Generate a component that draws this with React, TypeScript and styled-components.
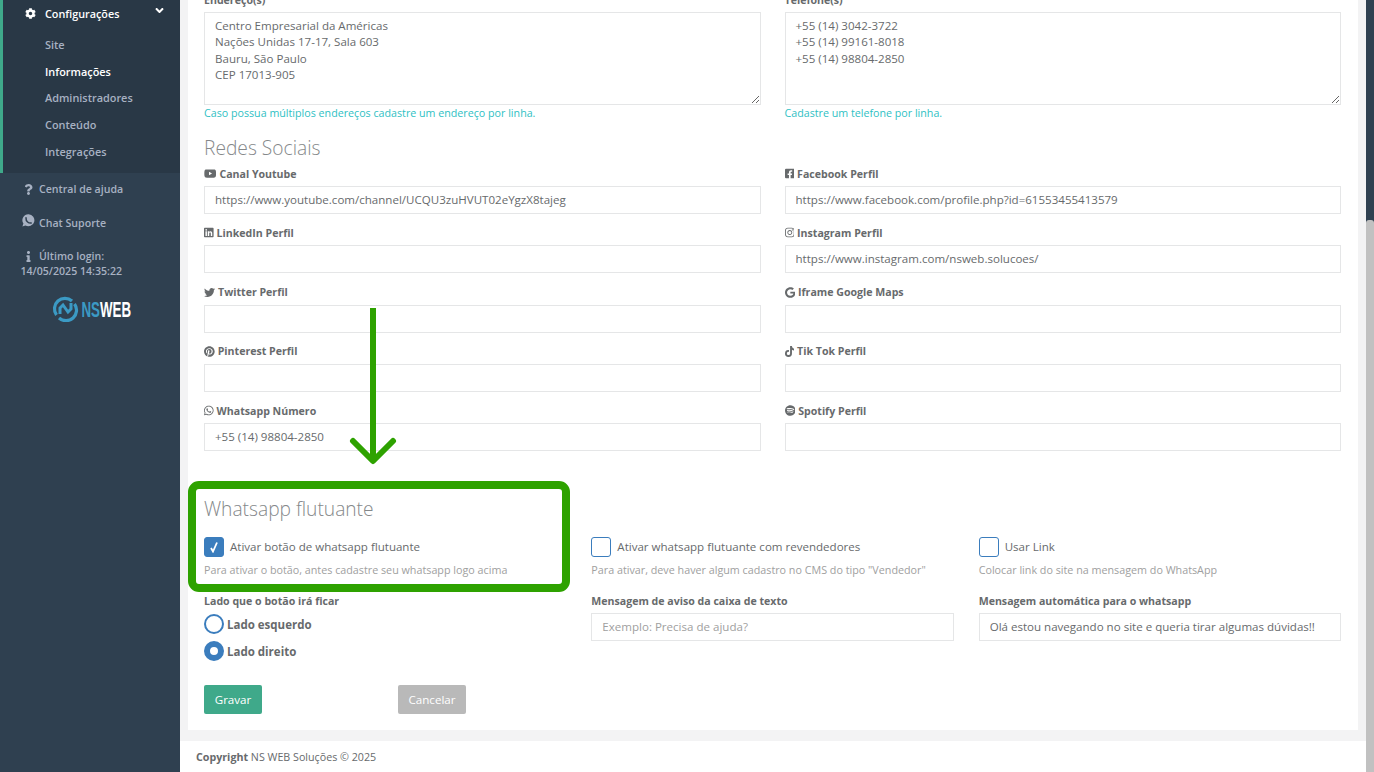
import React from "react";
import styled, { createGlobalStyle } from "styled-components";
import {
  FaAngleDown,
  FaCog,
  FaFacebookSquare,
  FaGoogle,
  FaInfo,
  FaInstagram,
  FaLinkedin,
  FaPinterest,
  FaQuestion,
  FaSpotify,
  FaTiktok,
  FaTwitter,
  FaWhatsapp,
  FaYoutube,
} from "react-icons/fa";

const GlobalStyle = createGlobalStyle`
  html, body {
    margin: 0;
    height: 100%;
    overflow: hidden;
    background: #f3f3f4;
    font-family: "Open Sans", "Liberation Sans", sans-serif;
    color: #676a6c;
  }
  * { box-sizing: border-box; }
`;

const socials = [
  { icon: <FaYoutube />, w: 12.4, label: "Canal Youtube", value: "https://www.youtube.com/channel/UCQU3zuHVUT02eYgzX8tajeg" },
  { icon: <FaFacebookSquare />, w: 9.6, label: "Facebook Perfil", value: "https://www.facebook.com/profile.php?id=61553455413579" },
  { icon: <FaLinkedin />, w: 9.6, label: "LinkedIn Perfil", value: "" },
  { icon: <FaInstagram />, w: 9.6, label: "Instagram Perfil", value: "https://www.instagram.com/nsweb.solucoes/" },
  { icon: <FaTwitter />, w: 11, label: "Twitter Perfil", value: "" },
  { icon: <FaGoogle />, w: 10.5, label: "Iframe Google Maps", value: "" },
  { icon: <FaPinterest />, w: 10.7, label: "Pinterest Perfil", value: "" },
  { icon: <FaTiktok />, w: 9.6, label: "Tik Tok Perfil", value: "" },
  { icon: <FaWhatsapp />, w: 9.6, label: "Whatsapp Número", value: "+55 (14) 98804-2850" },
  { icon: <FaSpotify />, w: 10.7, label: "Spotify Perfil", value: "" },
];

const submenu = ["Site", "Informações", "Administradores", "Conteúdo", "Integrações"];

function Logo() {
  return (
    <svg width="80" height="26" viewBox="0 0 80 26">
      <path d="M20 5 A10.5 10.5 0 0 0 4.5 19" fill="none" stroke="#3b9ac4" strokeWidth="3.2" />
      <path d="M7 22 A10.5 10.5 0 0 0 22.5 8" fill="none" stroke="#3b9ac4" strokeWidth="3.2" />
      <path d="M8 18 L8 12 L11 9 L16 16 L19 13 L19 7" fill="none" stroke="#3b9ac4" strokeWidth="3" />
      <text x="29.5" y="21" fontFamily="Liberation Sans, sans-serif" fontWeight="700" fontSize="22" fill="#ffffff" textLength="49.5" lengthAdjust="spacingAndGlyphs">
        <tspan fill="#3b9ac4">NS</tspan>WEB
      </text>
    </svg>
  );
}

function ChatIcon() {
  return (
    <svg width="13" height="13" viewBox="0 0 13 13">
      <path d="M6.6 0.3 A6 6 0 1 1 3.4 11.5 L0.4 12.6 L1.4 9.6 A6 6 0 0 1 6.6 0.3 Z" fill="#a7b1c2" />
      <path d="M4 3.8 Q3.8 6.6 5.6 8 Q7 9.2 9.2 9" fill="none" stroke="#2f4050" strokeWidth="1.5" strokeLinecap="round" />
    </svg>
  );
}

export default function App() {
  return (
    <Page>
      <GlobalStyle />
      <Sidebar>
        <ActiveGroup>
          <GroupHead>
            <FaCog size={11} />
            <GroupTitle>Configurações</GroupTitle>
            <Caret>
              <FaAngleDown size={13} />
            </Caret>
          </GroupHead>
          {submenu.map((item) => (
            <SubItem key={item} $active={item === "Informações"}>
              {item}
            </SubItem>
          ))}
        </ActiveGroup>
        <SideLink $top={8}>
          <SideIcon><FaQuestion size={11} /></SideIcon>
          Central de ajuda
        </SideLink>
        <SideLink $top={18}>
          <ChatIconWrap><ChatIcon /></ChatIconWrap>
          Chat Suporte
        </SideLink>
        <LoginBlock>
          <SideLink $top={0}>
            <SideIcon><FaInfo size={11} /></SideIcon>
            Último login:
          </SideLink>
          <LoginDate>14/05/2025 14:35:22</LoginDate>
        </LoginBlock>
        <LogoWrap>
          <Logo />
        </LogoWrap>
      </Sidebar>

      <Main>
        <Panel>
          <TwoCols>
            <div>
              <Label>Endereço(s)</Label>
              <TextArea
                readOnly
                value={"Centro Empresarial da Américas\nNações Unidas 17-17, Sala 603\nBauru, São Paulo\nCEP 17013-905"}
              />
              <Hint>Caso possua múltiplos endereços cadastre um endereço por linha.</Hint>
            </div>
            <div>
              <Label>Telefone(s)</Label>
              <TextArea readOnly value={"+55 (14) 3042-3722\n+55 (14) 99161-8018\n+55 (14) 98804-2850"} />
              <Hint>Cadastre um telefone por linha.</Hint>
            </div>
          </TwoCols>

          <SectionTitle>Redes Sociais</SectionTitle>
          <SocialGrid>
            {socials.map((s) => (
              <div key={s.label}>
                <Label>
                  <LabelIcon $w={s.w}>{s.icon}</LabelIcon>
                  {s.label}
                </Label>
                <Input readOnly value={s.value} />
              </div>
            ))}
          </SocialGrid>

          <WhatsappTitle>Whatsapp flutuante</WhatsappTitle>
          <ThreeCols>
            <div>
              <CheckRow>
                <CheckBox $checked>
                  <svg width="10" height="12" viewBox="0 0 10 12">
                    <path d="M2 7 L4 10.5 L8 1.5" fill="none" stroke="#fff" strokeWidth="1.8" />
                  </svg>
                </CheckBox>
                Ativar botão de whatsapp flutuante
              </CheckRow>
              <Note>Para ativar o botão, antes cadastre seu whatsapp logo acima</Note>
            </div>
            <div>
              <CheckRow>
                <CheckBox />
                Ativar whatsapp flutuante com revendedores
              </CheckRow>
              <Note>Para ativar, deve haver algum cadastro no CMS do tipo "Vendedor"</Note>
            </div>
            <div>
              <CheckRow>
                <CheckBox />
                Usar Link
              </CheckRow>
              <Note>Colocar link do site na mensagem do WhatsApp</Note>
            </div>

            <div>
              <RadioTitle>Lado que o botão irá ficar</RadioTitle>
              <RadioRow>
                <Radio />
                Lado esquerdo
              </RadioRow>
              <RadioRow>
                <Radio $checked />
                Lado direito
              </RadioRow>
            </div>
            <div>
              <Label>Mensagem de aviso da caixa de texto</Label>
              <Input readOnly placeholder="Exemplo: Precisa de ajuda?" />
            </div>
            <div>
              <Label>Mensagem automática para o whatsapp</Label>
              <Input readOnly value="Olá estou navegando no site e queria tirar algumas dúvidas!!" />
            </div>
          </ThreeCols>

          <Actions>
            <SaveButton>Gravar</SaveButton>
            <CancelButton>Cancelar</CancelButton>
          </Actions>
        </Panel>
        <Footer>
          <strong>Copyright</strong> NS WEB Soluções © 2025
        </Footer>
      </Main>

      <ScrollTrack>
        <ScrollThumb />
      </ScrollTrack>

      <Highlight />
      <Arrow width="48" height="160" viewBox="0 0 48 160">
        <path d="M24 0 L24 152 M4 133 L24 153 L44 133" fill="none" stroke="#2ea200" strokeWidth="6" strokeLinecap="round" strokeLinejoin="round" />
      </Arrow>
    </Page>
  );
}

const Page = styled.div`
  position: relative;
  display: flex;
  width: 1374px;
  height: 772px;
  overflow: hidden;
`;

const Sidebar = styled.aside`
  flex: 0 0 180px;
  background: #2f4050;
  color: #a7b1c2;
  font-size: 10.6px;
  font-weight: 600;
`;

const ActiveGroup = styled.div`
  height: 173px;
  background: #293846;
  border-left: 3px solid #3fa98a;
`;

const GroupHead = styled.div`
  display: flex;
  align-items: center;
  height: 27px;
  margin-bottom: 5px;
  padding-left: 22px;
  color: #ffffff;
  font-size: 10.8px;
`;

const GroupTitle = styled.span`
  margin-left: 9px;
`;

const Caret = styled.span`
  display: flex;
  margin-left: auto;
  margin-right: 14px;
  margin-top: -6px;
`;

const SubItem = styled.div<{ $active?: boolean }>`
  height: 26.65px;
  line-height: 26.65px;
  padding-left: 42px;
  font-size: 10.9px;
  color: ${(p) => (p.$active ? "#ffffff" : "#a7b1c2")};
`;

const SideLink = styled.div<{ $top: number }>`
  display: flex;
  align-items: center;
  height: 16px;
  margin-top: ${(p) => p.$top}px;
  padding-left: 22px;
`;

const SideIcon = styled.span`
  display: flex;
  justify-content: center;
  width: 13px;
  margin-right: 4px;
`;

const ChatIconWrap = styled(SideIcon)`
  margin-top: -5px;
`;

const LoginBlock = styled.div`
  margin-top: 17px;
`;

const LoginDate = styled.div`
  padding-left: 20.5px;
  line-height: 15px;
`;

const LogoWrap = styled.div`
  display: flex;
  margin-top: 17px;
  padding-left: 52px;
`;

const Main = styled.main`
  flex: 1;
  display: flex;
  flex-direction: column;
  min-width: 0;
  padding-left: 8px;
`;

const Panel = styled.div`
  flex: 0 0 739px;
  margin-top: -9px;
  margin-right: 8px;
  padding: 0 17px 0 16px;
  background: #ffffff;
`;

const TwoCols = styled.div`
  display: grid;
  grid-template-columns: 1fr 1fr;
  column-gap: 24px;
`;

const SocialGrid = styled(TwoCols)`
  row-gap: 10.33px;
`;

const ThreeCols = styled.div`
  display: grid;
  grid-template-columns: repeat(3, 1fr);
  column-gap: 25px;
  row-gap: 14px;
`;

const Label = styled.label`
  display: flex;
  align-items: center;
  gap: 3px;
  height: 17px;
  margin-bottom: 4px;
  line-height: 18px;
  font-size: 10.6px;
  font-weight: 700;
`;

const LabelIcon = styled.span<{ $w: number }>`
  display: flex;
  flex: none;
  width: ${(p) => p.$w}px;
  svg {
    width: 100%;
    height: 11px;
  }
`;

const fieldStyles = `
  display: block;
  width: 100%;
  padding: 0 10px;
  border: 1px solid #e5e6e7;
  outline: none;
  background: #ffffff;
  color: #676a6c;
  font-family: "Open Sans", "Liberation Sans", sans-serif;
  font-size: 11.55px;
  &::placeholder {
    color: #a0a0a0;
    opacity: 1;
  }
`;

const Input = styled.input`
  ${fieldStyles}
  height: 28px;
  padding-bottom: 1px;
`;

const TextArea = styled.textarea`
  ${fieldStyles}
  height: 93px;
  padding-top: 5px;
  line-height: 16.3px;
  resize: both;
  overflow: hidden;
`;

const Hint = styled.div`
  height: 15px;
  line-height: 17px;
  font-size: 10.7px;
  color: #2fbfc4;
`;

const SectionTitle = styled.h3`
  margin: 16px 0 5px;
  height: 24px;
  line-height: 24px;
  font-size: 19.2px;
  font-weight: 300;
  color: #85888a;
`;

const WhatsappTitle = styled(SectionTitle)`
  margin: 46px 0 16px;
`;

const CheckRow = styled.div`
  display: flex;
  align-items: flex-start;
  gap: 6px;
  height: 20px;
  line-height: 19px;
  font-size: 11.55px;
`;

const CheckBox = styled.span<{ $checked?: boolean }>`
  display: flex;
  align-items: center;
  justify-content: center;
  width: 20px;
  height: 20px;
  border: 1px solid #3b7dbd;
  border-radius: 3px;
  background: ${(p) => (p.$checked ? "#3b7dbd" : "#ffffff")};
`;

const Note = styled.div`
  margin-top: 5px;
  height: 16px;
  line-height: 16px;
  font-size: 10.75px;
  color: #a0a0a0;
`;

const RadioTitle = styled(Label)`
  margin-bottom: 5px;
`;

const RadioRow = styled.div`
  display: flex;
  align-items: center;
  gap: 3px;
  height: 20px;
  margin-bottom: 7px;
  font-size: 11.5px;
  font-weight: 700;
`;

const Radio = styled.span<{ $checked?: boolean }>`
  width: 20px;
  height: 20px;
  border-radius: 50%;
  border: ${(p) => (p.$checked ? "6.5px" : "2.5px")} solid #3b7dbd;
  background: #ffffff;
`;

const Actions = styled.div`
  display: flex;
  gap: 136px;
  margin-top: 17px;
`;

const BaseButton = styled.button`
  height: 29px;
  border: 1px solid transparent;
  border-radius: 2px;
  color: #ffffff;
  font-family: "Open Sans", "Liberation Sans", sans-serif;
  font-size: 11.6px;
`;

const SaveButton = styled(BaseButton)`
  width: 58px;
  background: #3fa98a;
`;

const CancelButton = styled(BaseButton)`
  width: 68px;
  background: #b9b9b9;
`;

const Footer = styled.footer`
  flex: 1;
  margin-top: 11px;
  margin-left: -8px;
  padding: 8px 0 0 16px;
  background: #ffffff;
  font-size: 10.7px;
  line-height: 17px;
`;

const ScrollTrack = styled.div`
  flex: 0 0 8px;
  display: flex;
  flex-direction: column;
  background: #2f4050;
`;

const ScrollThumb = styled.div`
  height: 552px;
  margin-top: 220px;
  background: #c1c1c1;
  border-radius: 3px 3px 0 0;
`;

const Highlight = styled.div`
  position: absolute;
  left: 188px;
  top: 481px;
  width: 382px;
  height: 111px;
  border: 8px solid #2ea200;
  border-radius: 11px;
  pointer-events: none;
`;

const Arrow = styled.svg`
  position: absolute;
  left: 349px;
  top: 308px;
`;
